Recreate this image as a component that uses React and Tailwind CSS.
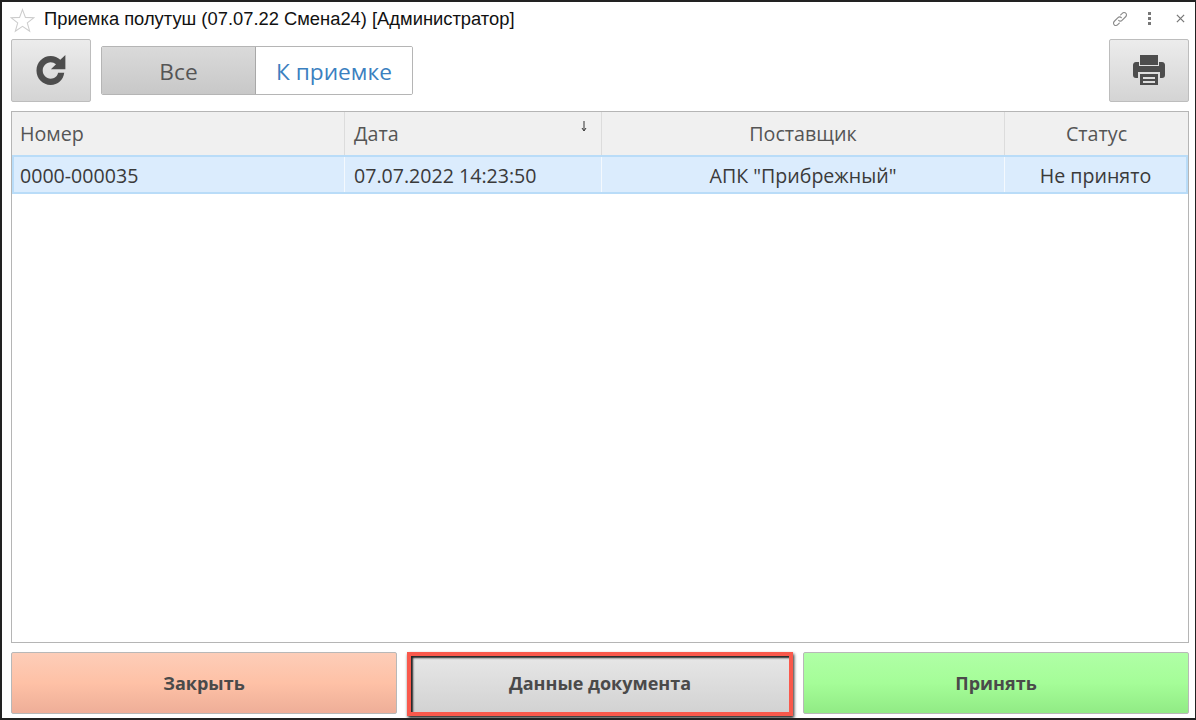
import React from "react";

const openSans = "font-['Open_Sans',sans-serif]";

function StarIcon() {
  return (
    <svg viewBox="0 0 24 24" className="w-[25px] h-[25px] shrink-0" fill="#ffffff" stroke="#cccccc" strokeWidth="1" strokeLinejoin="miter">
      <path d="M12 1.5 L14.8 9 L23 9.3 L16.6 14.3 L18.9 22.3 L12 17.7 L5.1 22.3 L7.4 14.3 L1 9.3 L9.2 9 Z" />
    </svg>
  );
}

function RefreshIcon() {
  return (
    <svg viewBox="0 0 32 32" className="w-[37px] h-[37px]" fill="#4d4d4d">
      <path d="M27 18 C26.3 24.3 21.5 28.5 15.3 28.5 C8.5 28.5 3 23 3 16 C3 9 8.5 3.5 15.3 3.5 C18.6 3.5 21.4 4.7 23.6 6.7 L28 2.5 L28 15 L15.5 15 L19.9 10.7 C18.6 9.5 17 8.9 15.3 8.9 C11.5 8.9 8.4 12.1 8.4 16 C8.4 19.9 11.5 23.1 15.3 23.1 C18.6 23.1 21.1 21 21.7 18 Z" />
    </svg>
  );
}

function PrintIcon() {
  return (
    <svg viewBox="0 0 34 32" className="w-[34px] h-[32px] -mt-[2px]" fill="#4d4d4d">
      <rect x="8" y="1" width="18" height="10" />
      <path fillRule="evenodd" d="M4 8 H7 V12 H27 V8 H30 C32 8 33 9.5 33 11 V21 C33 23 32 24 30 24 H28 V18 H6 V24 H4 C2 24 1 23 1 21 V11 C1 9.5 2 8 4 8 Z" />
      <path fillRule="evenodd" d="M8 20 H26 V31 H8 Z M11 23 V25 H23 V23 Z M11 27 V29 H23 V27 Z" />
    </svg>
  );
}

function LinkIcon() {
  return (
    <svg viewBox="0 0 16 16" className="w-[18px] h-[18px]" fill="none" stroke="#8a8a8a" strokeWidth="1" strokeLinecap="round">
      <path d="M6.8 9.2 C7.8 10.2 9 10 9.8 9.2 L13 6 C14 5 14 3.6 13.1 2.8 C12.3 1.9 10.9 2 10 3 L8.6 4.4" />
      <path d="M9.2 6.8 C8.2 5.8 7 6 6.2 6.8 L3 10 C2 11 2 12.4 2.9 13.2 C3.7 14.1 5.1 14 6 13 L7.4 11.6" />
    </svg>
  );
}

function SortArrow() {
  return (
    <svg viewBox="0 0 8 12" className="absolute right-[13px] top-[8px] w-[8px] h-[12px]" fill="none" stroke="#333333" strokeWidth="1">
      <path d="M4 1 V10 M2 8 L4 11 L6 8" />
    </svg>
  );
}

function HeaderCell({ className, children }) {
  return (
    <div className={`flex items-center px-[8px] text-[19.7px] text-[#555555] border-r border-[#dcdcdc] last:border-r-0 ${className}`}>
      {children}
    </div>
  );
}

function RowCell({ className, children }) {
  return (
    <div className={`flex items-center px-[8px] pt-[2px] text-[19.6px] text-[#3a3a3a] border-r border-[#f4f9fe] last:border-r-0 ${className}`}>
      {children}
    </div>
  );
}

function ActionButton({ className, children }) {
  return (
    <button className={`w-[386px] shrink-0 h-[62px] rounded-[2px] border border-[#b8b8b8] text-[18px] font-bold text-[#4a4a4a] ${className}`}>
      {children}
    </button>
  );
}

export default function App() {
  return (
    <div className={`w-[1196px] h-[720px] bg-white border-t-2 border-l-2 border-r border-b-[2px] border-[#222222] flex flex-col overflow-hidden ${openSans}`}>
      <div className="h-[37px] shrink-0 flex items-center pl-[8px] pr-[10px]">
        <StarIcon />
        <div className="ml-[9px] -mt-[3px] font-['Liberation_Sans',sans-serif] text-[18.35px] text-[#111111]">
          Приемка полутуш (07.07.22 Смена24) [Администратор]
        </div>
        <div className="ml-auto -mt-[4px] flex items-center">
          <LinkIcon />
          <div className="ml-[19px] flex flex-col gap-[2px]">
            <span className="w-[3px] h-[3px] bg-[#777777]" />
            <span className="w-[3px] h-[3px] bg-[#777777]" />
            <span className="w-[3px] h-[3px] bg-[#777777]" />
          </div>
          <svg viewBox="0 0 10 10" className="ml-[25px] w-[9px] h-[9px]" stroke="#777777" strokeWidth="1.4">
            <path d="M1 1 L9 9 M9 1 L1 9" />
          </svg>
        </div>
      </div>

      <div className="h-[63px] shrink-0 flex items-center pl-[9px] pr-[6px]">
        <button className="w-[80px] h-[63px] rounded-[2px] border border-[#bdbdbd] bg-gradient-to-b from-[#ececec] to-[#d4d4d4] flex items-center justify-center">
          <RefreshIcon />
        </button>
        <div className="ml-[10px] w-[312px] h-[49px] flex rounded-[2px] border border-[#b5b5b5] overflow-hidden text-[22.7px]">
          <div className="w-[154px] pt-[3px] bg-gradient-to-b from-[#dadada] to-[#c8c8c8] border-r border-[#a8a8a8] text-[#555555] flex items-center justify-center">
            Все
          </div>
          <div className="flex-1 pt-[3px] bg-white text-[#3b80c0] flex items-center justify-center">
            К приемке
          </div>
        </div>
        <button className="ml-auto w-[80px] h-[63px] rounded-[2px] border border-[#bdbdbd] bg-gradient-to-b from-[#ececec] to-[#d4d4d4] flex items-center justify-center">
          <PrintIcon />
        </button>
      </div>

      <div className="mt-[9px] ml-[9px] mr-[6px] h-[532px] shrink-0 border border-[#b5b5b5] bg-white">
        <div className="h-[43px] flex bg-[#f0f0f0]">
          <HeaderCell className="w-[333px]">Номер</HeaderCell>
          <HeaderCell className="w-[257px] relative pl-[9px]">
            Дата
            <SortArrow />
          </HeaderCell>
          <HeaderCell className="w-[403px] justify-center">Поставщик</HeaderCell>
          <HeaderCell className="flex-1 justify-center">Статус</HeaderCell>
        </div>
        <div className="h-[39px] flex bg-[#dbecfd] border-2 border-[#b9dcf8]">
          <RowCell className="w-[331px] pl-[6px]">0000-000035</RowCell>
          <RowCell className="w-[257px] pl-[9px]">07.07.2022 14:23:50</RowCell>
          <RowCell className="w-[403px] justify-center">АПК "Прибрежный"</RowCell>
          <RowCell className="flex-1 justify-center">Не принято</RowCell>
        </div>
      </div>

      <div className="mt-[9px] ml-[9px] mr-[6px] flex gap-[10px]">
        <ActionButton className="bg-gradient-to-b from-[#fdcdb8] via-[#fec1a6] to-[#eeae98]">Закрыть</ActionButton>
        <div className="relative flex">
          <ActionButton className="bg-gradient-to-b from-[#e8e8e8] to-[#d2d2d2]">Данные документа</ActionButton>
          <div className="absolute inset-x-0 top-0 -bottom-[2px] border-[4px] border-[#f9594c] shadow-[1px_2px_3px_#222222,inset_2px_2px_2px_#222222] pointer-events-none" />
        </div>
        <ActionButton className="bg-gradient-to-b from-[#b0ffa6] via-[#a5fd98] to-[#91eb85]">Принять</ActionButton>
      </div>
    </div>
  );
}
